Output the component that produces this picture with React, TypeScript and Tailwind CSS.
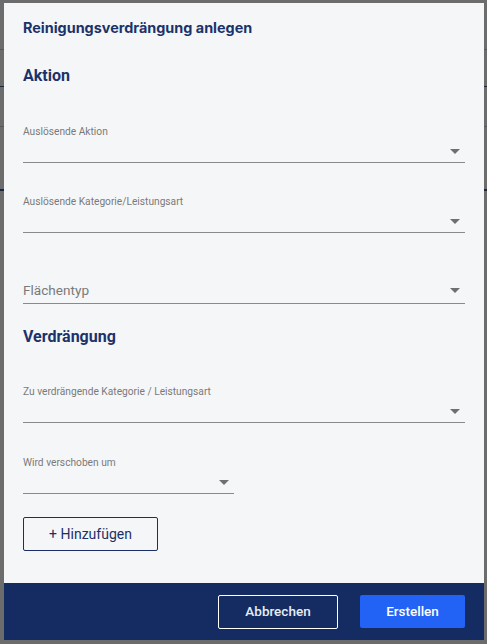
import React from "react";

const navy = "text-[#1b326a]";

function Caret() {
  return (
    <svg width="10" height="5" viewBox="0 0 10 5" className="shrink-0">
      <path d="M0 0h10L5 5z" fill="#6f6f6f" />
    </svg>
  );
}

function SelectField({ label, className = "" }: { label: string; className?: string }) {
  return (
    <div className={className}>
      <div className="text-[10.2px] leading-[14px] text-[#7a7a7a]">{label}</div>
      <div className="flex h-[24px] items-center justify-end border-b border-[#8a8a8a] pr-[5px] pt-[2px]">
        <Caret />
      </div>
    </div>
  );
}

export default function App() {
  return (
    <div className="relative h-[644px] w-[487px] overflow-hidden bg-[#6c6c6c] font-['Roboto',sans-serif]">
      {/* page behind the overlay */}
      <div className="flex flex-col">
        <div className="mt-[49px] h-px bg-[#585858]" />
        <div className="mt-[36px] h-px bg-[#1c2540]" />
        <div className="mt-[39px] h-px bg-[#585858]" />
        <div className="mt-[62px] h-[2px] bg-[#1c2540]" />
      </div>

      {/* dialog */}
      <div className="absolute left-[4px] top-[3px] flex h-[637px] w-[480px] flex-col bg-[#f5f6f8]">
        <div className="flex flex-1 flex-col px-[19px] pt-[15px]">
          <h2 className={`font-['Inter',sans-serif] text-[14.4px] font-bold leading-[20px] ${navy}`}>
            Reinigungsverdrängung anlegen
          </h2>
          <h3 className={`mt-[26px] text-[16px] font-bold leading-[24px] ${navy}`}>
            Aktion
          </h3>

          <SelectField label="Auslösende Aktion" className="mt-[37px]" />
          <SelectField label="Auslösende Kategorie/Leistungsart" className="mt-[32px]" />

          <div className="mt-[49px] flex items-center justify-between border-b border-[#8a8a8a] pb-[5px] pr-[5px]">
            <span className="text-[13.6px] leading-[16px] text-[#7a7a7a]">Flächentyp</span>
            <Caret />
          </div>

          <h3 className={`mt-[21px] text-[16px] font-bold leading-[24px] ${navy}`}>
            Verdrängung
          </h3>

          <SelectField label="Zu verdrängende Kategorie / Leistungsart" className="mt-[36px]" />
          <SelectField label="Wird verschoben um" className="mt-[33px] w-[211px]" />

          <button className="mt-[23px] flex h-[34px] w-[135px] items-center justify-center rounded-[2px] border border-[#1b2f66] text-[14px] text-[#1b2f66]">
            + Hinzufügen
          </button>
        </div>

        <div className="flex h-[57px] items-center justify-end gap-[22px] bg-[#142c62] pr-[19px]">
          <button className="flex h-[34px] w-[120px] items-center justify-center rounded-[2px] border border-white text-[13.5px] font-medium text-[#e8ecf5]">
            Abbrechen
          </button>
          <button className="flex h-[33px] w-[105px] items-center justify-center rounded-[2px] bg-[#2263f6] text-[13.5px] font-medium text-white">
            Erstellen
          </button>
        </div>
      </div>
    </div>
  );
}
